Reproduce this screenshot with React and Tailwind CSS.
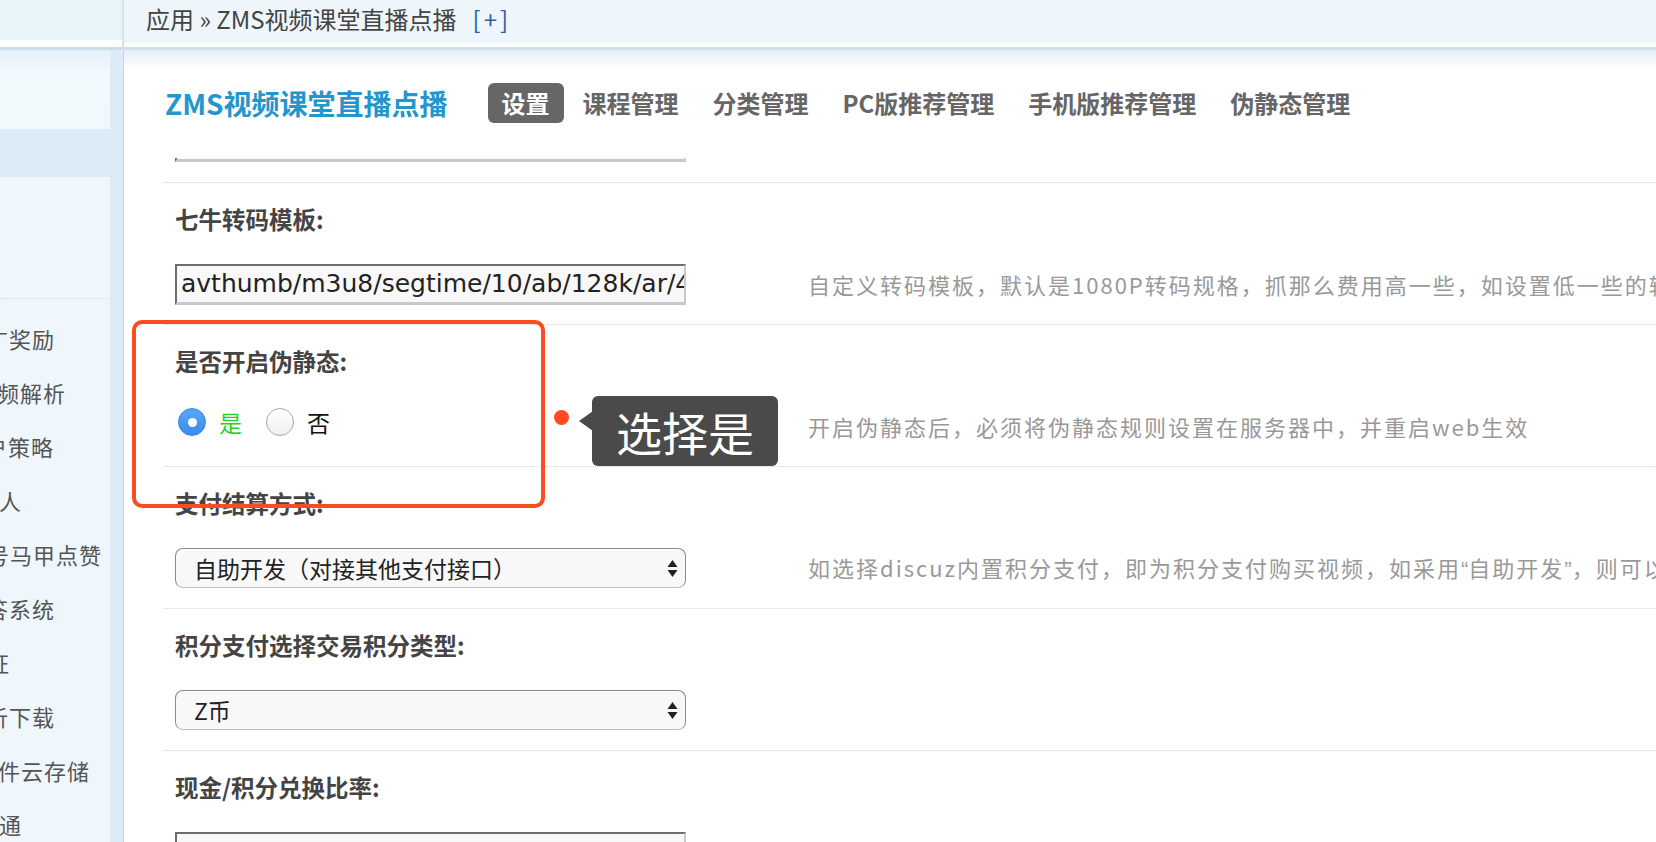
import React from "react";

const sideItems = [
  { t: "推广奖励", c: "ml-[-37px]" },
  { t: "视频解析", c: "ml-[-26px]" },
  { t: "用户策略", c: "ml-[-38px]" },
  { t: "机器人", c: "ml-[-47px]" },
  { t: "账号马甲点赞", c: "ml-[-36px]" },
  { t: "问答系统", c: "ml-[-37px]" },
  { t: "实名认证", c: "ml-[-82px]" },
  { t: "解析下载", c: "ml-[-37px]" },
  { t: "文件云存储", c: "ml-[-25px]" },
  { t: "互通", c: "ml-[-24px]" },
];

function SelectArrows() {
  return (
    <svg width="11" height="17" viewBox="0 0 11 17" className="shrink-0">
      <path d="M5.5 0 L10.5 7 L0.5 7 Z" fill="#222" />
      <path d="M0.5 10 L10.5 10 L5.5 17 Z" fill="#222" />
    </svg>
  );
}

function FakeSelect({ value }) {
  return (
    <div className="h-[40px] w-[511px] rounded-[8px] border border-[#8a8a8a] border-b-[#bdbdbd] bg-[#f8f8f8] flex items-center pl-[18px] pr-[7px] text-[23px] text-[#222] shadow-[inset_0_1px_0_#fff]">
      <span className="flex-1 whitespace-nowrap overflow-hidden">{value}</span>
      <SelectArrows />
    </div>
  );
}

function FakeInput({ value, h = "h-[41px]" }) {
  return (
    <div
      className={`${h} w-[511px] border-t-2 border-l-2 border-t-[#6e6e6e] border-l-[#6e6e6e] border-b-[3px] border-r-2 border-b-[#c9c9c9] border-r-[#c9c9c9] bg-[#f8f8f8] flex items-center pl-[4px] overflow-hidden font-['DejaVu_Sans',sans-serif] text-[25px] text-[#222]`}
    >
      <span className="block w-full overflow-hidden whitespace-nowrap">{value}</span>
    </div>
  );
}

function Row({ label, children, desc, fieldClass = "" }) {
  return (
    <div className="border-t border-dotted border-[#c3dbea] pl-[11px] pt-[21px] pb-[20px]">
      <div className="h-[30px] leading-[30px] text-[23.5px] font-bold text-[#444] whitespace-nowrap">
        {label}
      </div>
      <div className="mt-[30px] h-[40px] flex items-center">
        <div className={`w-[511px] shrink-0 overflow-hidden ${fieldClass}`}>{children}</div>
        {desc && (
          <div className="ml-[122px] whitespace-nowrap text-[22px] tracking-[2px] text-[#999]">
            {desc}
          </div>
        )}
      </div>
    </div>
  );
}

export default function App() {
  return (
    <div className="relative w-[1656px] h-[842px] overflow-hidden bg-white flex flex-col font-['Noto_Sans_CJK_SC',sans-serif]">
      {/* Header */}
      <div className="flex h-[50px] shrink-0">
        <div className="w-[122px] flex flex-col">
          <div className="h-[40px] bg-[#e8f3fa]" />
          <div className="h-[7px] bg-white" />
          <div className="h-[3px] bg-[#c9dce7]" />
        </div>
        <div className="w-[2px] bg-[#d3e3ed]" />
        <div className="flex-1 flex flex-col">
          <div className="h-[43px] bg-[#eef6fb] flex items-center pl-[22px] pb-[6px] text-[24px] text-[#444] whitespace-nowrap">
            <span>应用 » ZMS视频课堂直播点播</span>
            <span className="ml-[16px] tracking-[3px] text-[#2860a6]">[+]</span>
          </div>
          <div className="h-[4px] bg-white" />
          <div className="h-[3px] bg-[#c9dce7]" />
        </div>
      </div>

      {/* Body */}
      <div className="flex flex-1 min-h-0">
        {/* Sidebar */}
        <div className="w-[110px] shrink-0 bg-[#eff7fc] flex flex-col overflow-hidden">
          <div className="h-[79px] shrink-0 bg-[linear-gradient(to_bottom,#e4eff7,#f3f9fd_20px,#f1f8fc)]" />
          <div className="h-[48px] shrink-0 bg-[#dbeaf5]" />
          <div className="h-[121px] shrink-0" />
          <div className="border-t border-dotted border-[#c9dbe8] w-[108px]" />
          <div className="mt-[12px] flex flex-col">
            {sideItems.map((it) => (
              <div key={it.t} className="h-[54px] flex items-center overflow-hidden">
                <span
                  className={`${it.c} whitespace-nowrap text-[22px] tracking-[1px] text-[#555]`}
                >
                  {it.t}
                </span>
              </div>
            ))}
          </div>
        </div>
        <div className="w-[13px] shrink-0 bg-[#dcebf7]" />
        <div className="w-[1px] shrink-0 bg-[#c2d5e2]" />

        {/* Main */}
        <div className="flex-1 min-w-0 flex flex-col overflow-hidden bg-[linear-gradient(to_bottom,#e5eff7_0px,#ffffff_20px)]">
          <div className="pt-[33px] pl-[41px] flex items-center h-[73px] shrink-0 whitespace-nowrap">
            <div className="text-[28px] font-bold text-[#2596cd] mr-[40px]">ZMS视频课堂直播点播</div>
            <div className="flex items-center gap-[4px]">
              <div className="h-[40px] px-[14px] rounded-[6px] bg-[#666] text-white text-[24px] font-bold flex items-center">
                设置
              </div>
              {["课程管理", "分类管理", "PC版推荐管理", "手机版推荐管理", "伪静态管理"].map((t) => (
                <div key={t} className="h-[40px] px-[15px] text-[#666] text-[24px] font-bold flex items-center">
                  {t}
                </div>
              ))}
            </div>
          </div>

          <div className="mt-[35px] flex-1 min-h-0 overflow-hidden pl-[40px]">
            <div className="ml-[11px] mt-[-38px] mb-[20px]">
              <FakeInput value="" h="h-[42px]" />
            </div>

            <Row
              label="七牛转码模板:"
              desc="自定义转码模板，默认是1080P转码规格，抓那么费用高一些，如设置低一些的转码规格则费用低一些"
            >
              <FakeInput value="avthumb/m3u8/segtime/10/ab/128k/ar/44100/acodec/libfaac" />
            </Row>

            <Row
              label="是否开启伪静态:"
              desc="开启伪静态后，必须将伪静态规则设置在服务器中，并重启web生效"
            >
              <div className="flex items-center pl-[3px] mb-[8px] text-[23px]">
                <div className="w-[28px] h-[28px] rounded-full bg-[linear-gradient(to_bottom,#5aa7f6,#3a8cec)] border border-[#3584e0] flex items-center justify-center">
                  <div className="w-[9px] h-[9px] rounded-full bg-white" />
                </div>
                <span className="ml-[13px] text-[#1fd41f]">是</span>
                <div className="ml-[24px] w-[28px] h-[28px] rounded-full bg-[linear-gradient(to_bottom,#ffffff,#f0f0f0)] border border-[#a9a9a9]" />
                <span className="ml-[13px] text-[#111]">否</span>
              </div>
            </Row>

            <Row
              label="支付结算方式:"
              desc={
                <>
                  如选择discuz内置积分支付，即为积分支付购买视频，如采用
                  <span className="font-['Liberation_Sans',sans-serif] tracking-[0px]">“</span>
                  自助开发
                  <span className="font-['Liberation_Sans',sans-serif] tracking-[0px]">”</span>
                  ，则可以对接其他支付接口
                </>
              }
            >
              <FakeSelect value="自助开发（对接其他支付接口）" />
            </Row>

            <Row label="积分支付选择交易积分类型:">
              <FakeSelect value="Z币" />
            </Row>

            <Row label="现金/积分兑换比率:">
              <FakeInput value="" />
            </Row>
          </div>
        </div>
      </div>

      {/* Annotation overlay */}
      <div className="absolute left-[132px] top-[320px] w-[413px] h-[188px] border-[4px] border-[#ff4b1f] rounded-[10px]" />
      <div className="absolute left-[554px] top-[410px] w-[15px] h-[15px] rounded-full bg-[#ff4b1f]" />
      <div className="absolute left-[579px] top-[421px] -translate-y-1/2 w-0 h-0 border-y-[10px] border-y-transparent border-r-[14px] border-r-[#4a4a4a]" />
      <div className="absolute left-[592px] top-[396px] w-[186px] h-[70px] rounded-[6px] bg-[#4a4a4a] flex items-center justify-center text-white text-[46px] leading-none">
        选择是
      </div>
    </div>
  );
}
